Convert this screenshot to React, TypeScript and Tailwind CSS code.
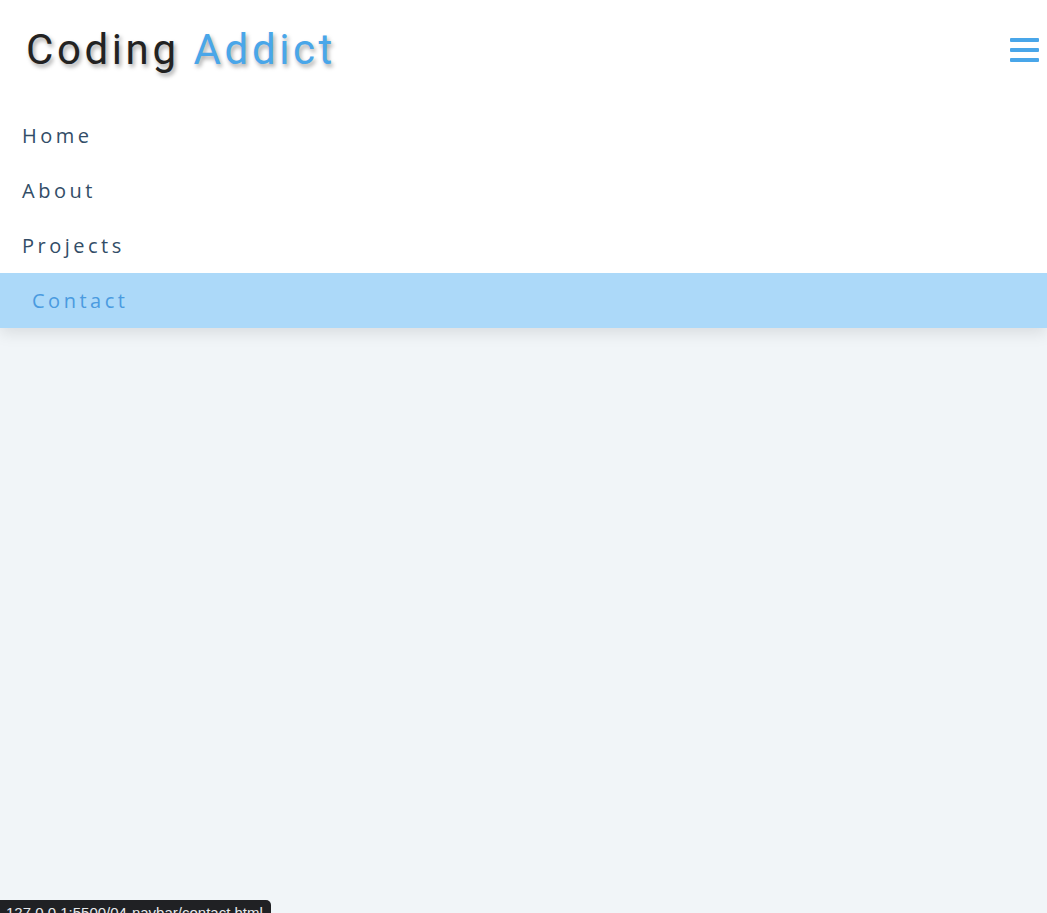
const LINKS = ["Home", "About", "Projects", "Contact"];

export default function App() {
  return (
    <div className="relative h-[913px] overflow-hidden bg-[#f1f5f8] font-['Open_Sans',sans-serif]">
      <nav className="bg-white shadow-[0_5px_15px_rgba(0,0,0,0.1)]">
        <div className="flex h-[100px] items-center justify-between pl-[26px] pr-[8px]">
          <h1 className="font-['Roboto',sans-serif] text-[42px] font-normal leading-none tracking-[3.6px] text-[#222] [text-shadow:2px_3px_4px_rgba(0,0,0,0.35)]">
            Coding <span className="text-[#49a6e9]">Addict</span>
          </h1>
          <button className="p-0" aria-label="menu">
            <svg width="29" height="26" viewBox="0 0 29 26" className="block">
              <rect x="0" y="1" width="29" height="4" rx="1" fill="#49a6e9" />
              <rect x="0" y="11" width="29" height="4" rx="1" fill="#49a6e9" />
              <rect x="0" y="21" width="29" height="4" rx="1" fill="#49a6e9" />
            </svg>
          </button>
        </div>
        <ul className="pt-[8px]">
          {LINKS.map((link) => {
            const active = link === "Contact";
            return (
              <li key={link}>
                <a
                  href="#"
                  className={
                    active
                      ? "flex h-[55px] items-center bg-[#acd9f9] pl-[32px] text-[20px] tracking-[3.5px] text-[#4a9be0]"
                      : "flex h-[55px] items-center pl-[22px] text-[20px] tracking-[3.5px] text-[#324d67]"
                  }
                >
                  {link}
                </a>
              </li>
            );
          })}
        </ul>
      </nav>

      <div className="absolute left-0 top-[900px] h-[20px] w-[271px] overflow-hidden rounded-tr-[5px] bg-[#202124] pl-[6px] pt-[3px] font-['Liberation_Sans',sans-serif] text-[15px] leading-[20px] text-[#e8eaed]">
        127.0.0.1:5500/04-navbar/contact.html
      </div>
    </div>
  );
}
